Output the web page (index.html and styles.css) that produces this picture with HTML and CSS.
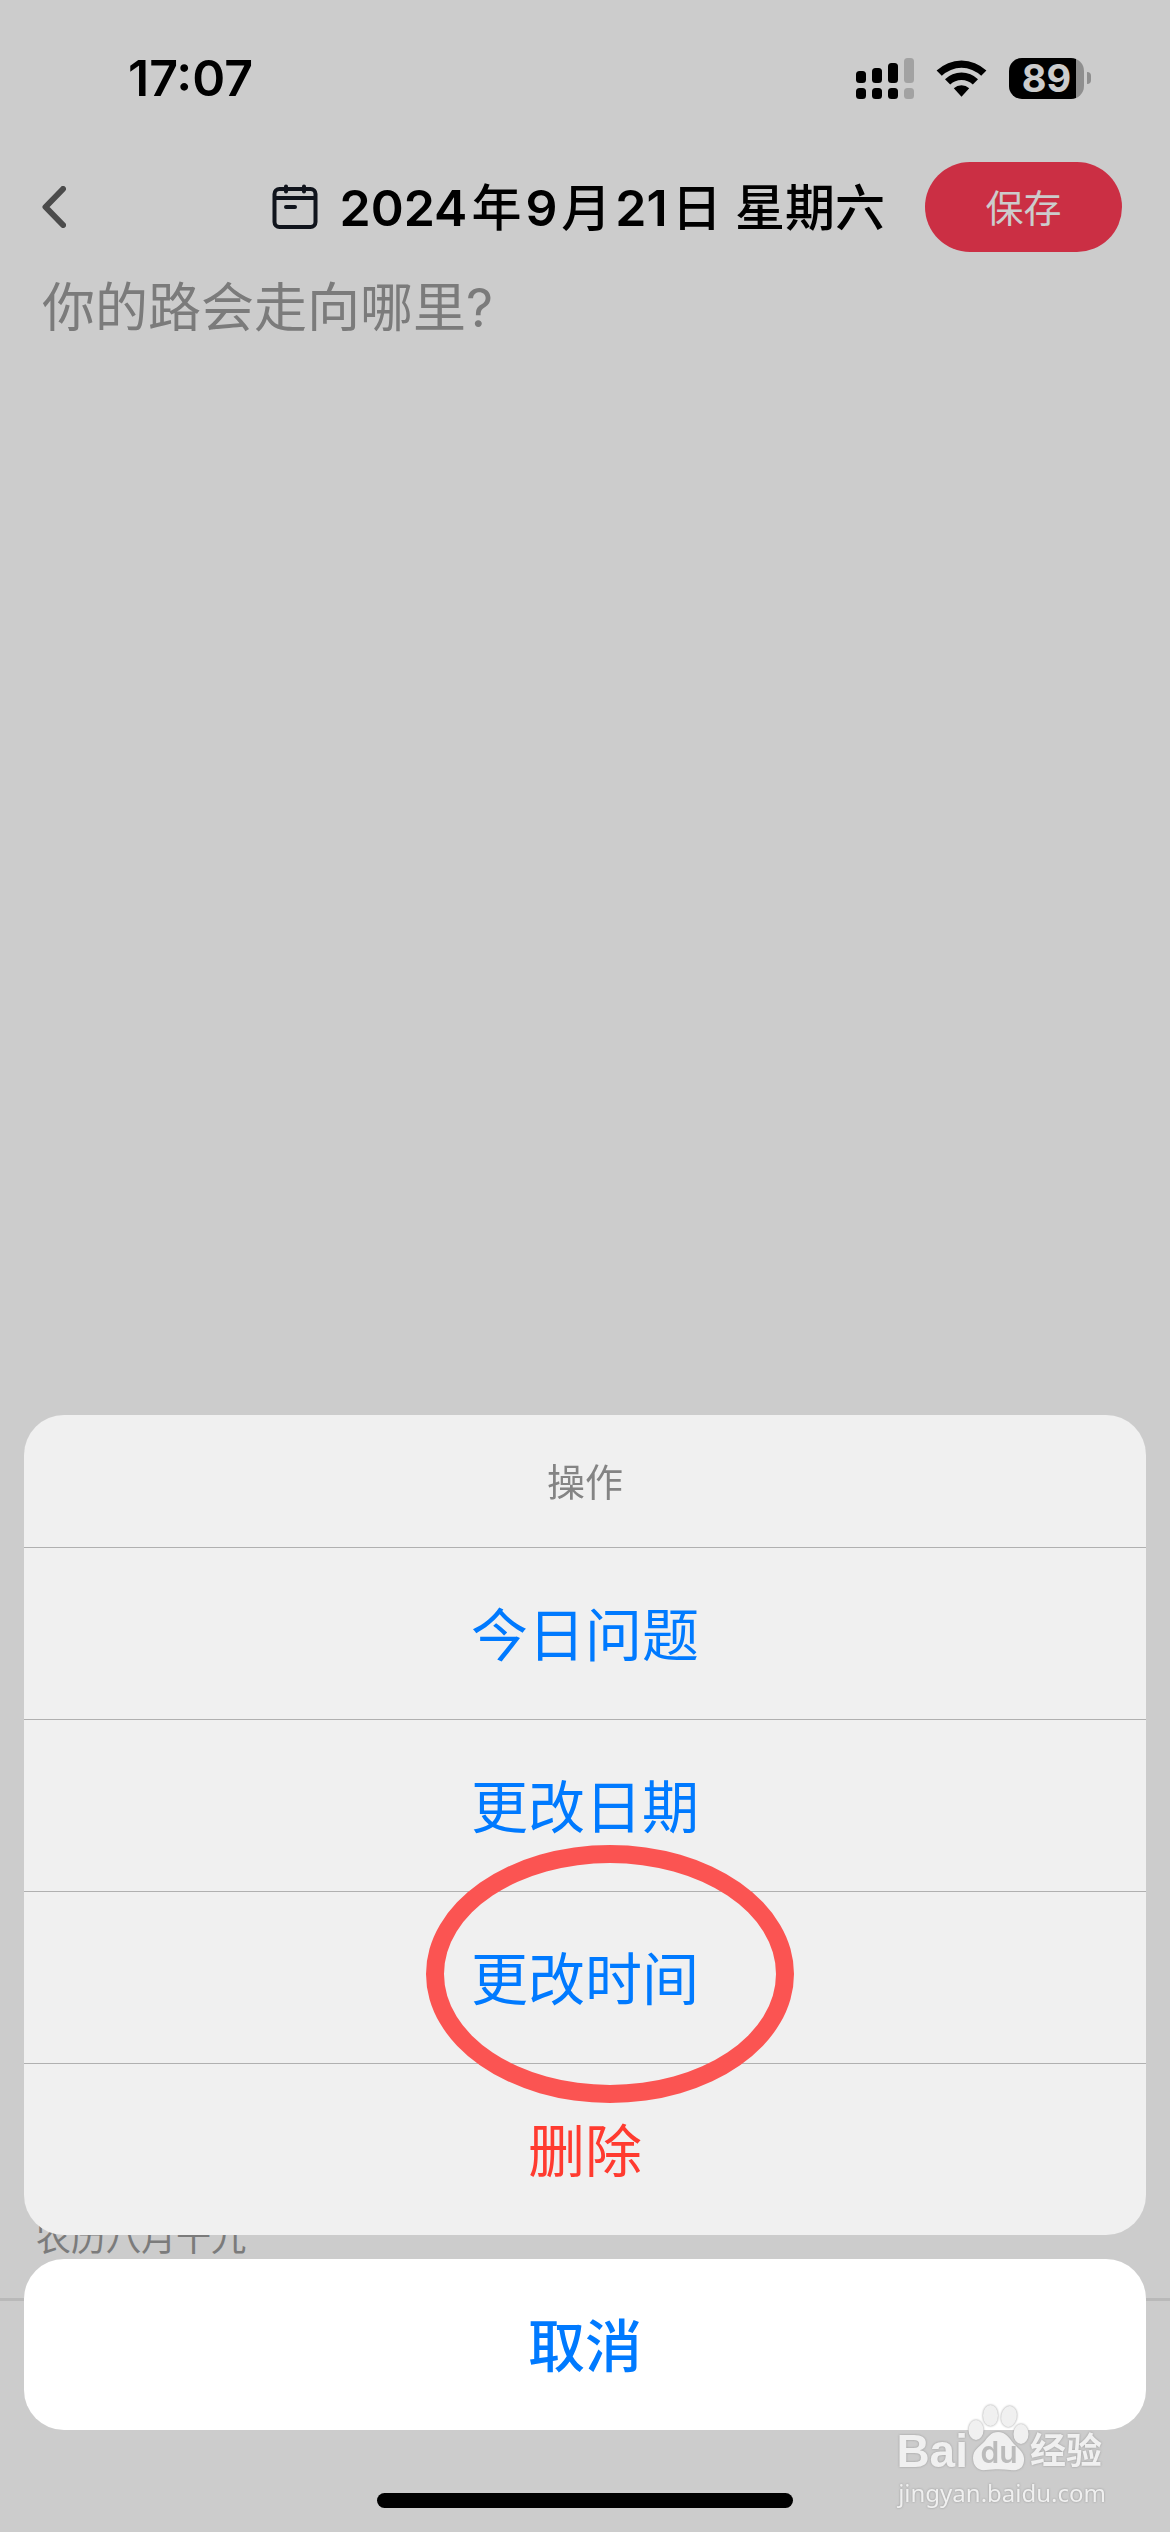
FILE: index.html
```
<!DOCTYPE html>
<html lang="zh-CN">
    <head>
        <title>日记</title>
        <meta charset="utf-8">
        <meta name="viewport" content="width=device-width">
        <link rel="stylesheet" href="styles.css">
    </head>
    <body>
        <div id="page">
            <div class="status-bar">
                <div class="time">17:07</div>
                <div class="status-icons">
                    <svg width="58" height="41" viewBox="0 0 58 41">
                        <g>
                            <rect x="0" y="13" width="10" height="12" rx="3.5"/>
                            <rect x="16" y="10" width="10" height="15" rx="3.5"/>
                            <rect x="32" y="5" width="10" height="20" rx="3.5"/>
                            <rect x="0" y="30" width="10" height="11" rx="3.5"/>
                            <rect x="16" y="30" width="10" height="11" rx="3.5"/>
                            <rect x="32" y="30" width="10" height="11" rx="3.5"/>
                        </g>
                        <g opacity=".2">
                            <rect x="48" y="0" width="10" height="25" rx="3.5"/>
                            <rect x="48" y="30" width="10" height="11" rx="3.5"/>
                        </g>
                    </svg>
                    <svg width="51" height="37" viewBox="0 0 51 37">
                        <path d="M0.6 10.6 A36 36 0 0 1 50.4 10.6 L45.2 15.8 A28.4 28.4 0 0 0 5.8 15.8 Z"/>
                        <path d="M9 19.3 A23.6 23.6 0 0 1 42 19.3 L36.8 24.6 A16.2 16.2 0 0 0 14.2 24.6 Z"/>
                        <path d="M17.8 28.2 A11.4 11.4 0 0 1 33.2 28.2 L25.5 36.8 Z"/>
                    </svg>
                    <div class="battery"><span>89</span></div>
                </div>
            </div>
            <div class="header">
                <button class="back" aria-label="返回">
                    <svg width="24" height="42" viewBox="0 0 24 42">
                        <path d="M21 3 L3.500 21 L21 39"/>
                    </svg>
                </button>
                <div class="date">
                    <svg width="46" height="46" viewBox="0 0 46 46">
                        <rect x="2.500" y="5" width="41" height="38" rx="5"/>
                        <path d="M3 14 H43 M14 2.500 V7.500 M32 2.500 V7.500 M14 23 H23"/>
                    </svg>
                    <div class="date-text"><b>2024</b>年<b>9</b>月<b>21</b>日 星期六</div>
                </div>
                <button class="save">保存</button>
            </div>
            <textarea aria-label="日记" placeholder="你的路会走向哪里?"></textarea>
            <div class="lunar">农历八月十九</div>
            <div class="toolbar"></div>
        </div>

        <div id="overlay">
            <div class="sheet">
                <div class="sheet-title">操作</div>
                <button>今日问题</button>
                <button>更改日期</button>
                <button class="marked">更改时间</button>
                <button class="danger">删除</button>
            </div>
            <button class="cancel">取消</button>
            <div class="home-indicator"></div>
        </div>

        <div class="watermark">
            <div class="brand">
                <span class="bai">Bai</span>
                <div class="paw">
                    <svg width="62" height="68" viewBox="0 0 62 68">
                        <ellipse cx="8" cy="26" rx="7.500" ry="10"/>
                        <ellipse cx="22.500" cy="11.500" rx="7.500" ry="10.500"/>
                        <ellipse cx="41" cy="12.500" rx="7.800" ry="10.500" transform="rotate(12 41 12.500)"/>
                        <ellipse cx="53" cy="30" rx="7.500" ry="10"/>
                        <path d="M30 28 C38 28 41 34 46 40 C51 45 57 49 56 57 C55 66 48 67 42 66 C34 65 27 65 18 66 C10 67 5 62 5 54 C5 46 11 43 16 38 C20 33 23 28 30 28 Z"/>
                    </svg>
                    <span>du</span>
                </div>
                <span class="jingyan">经验</span>
            </div>
            <div class="url">jingyan.baidu.com</div>
        </div>
    </body>
</html>
```
FILE: styles.css
```
*, *::after {
    box-sizing: border-box;
}
body {
    margin: 0;
    background: white;
    font-family: Inter, "Noto Sans CJK SC", sans-serif;
}
button {
    margin: 0;
    padding: 0;
    border: 0;
    background: none;
    font-family: inherit;
}
svg {
    display: block;
}
#page {
    display: flex;
    flex-direction: column;
    min-height: 100vh;
}

/* status bar */
.status-bar {
    display: flex;
    align-items: center;
    justify-content: space-between;
    height: 156px;
    padding: 0 78px 0 128px;
}
.time {
    font-size: 50px;
    font-weight: 600;
}
.status-icons {
    display: flex;
    align-items: center;
    gap: 22px;
}
.battery {
    position: relative;
    width: 75px;
    height: 41px;
    margin-right: 8px;
    border-radius: 13px;
    background: linear-gradient(to right, black 67px, #b3b3b3 67px);
    color: white;
    font-size: 38px;
    font-weight: 700;
    line-height: 41px;
    text-align: center;
}
.battery::after {
    content: "";
    position: absolute;
    top: 14px;
    right: -7px;
    width: 4px;
    height: 12px;
    border-radius: 0 4px 4px 0;
    background: #b3b3b3;
}

/* header */
.header {
    display: flex;
    align-items: center;
    justify-content: space-between;
    height: 102px;
    padding: 0 48px 0 42px;
}
.back svg {
    fill: none;
    stroke: #5e5e5e;
    stroke-width: 6;
    stroke-linecap: round;
    stroke-linejoin: round;
}
.date {
    display: flex;
    align-items: center;
    gap: 22px;
    margin-left: auto;
    margin-right: 40px;
    font-size: 50px;
    font-weight: 500;
    white-space: nowrap;
}
.date-text {
    padding-bottom: 6px;
}
.date b {
    margin: 0 4px;
    font-weight: 600;
}
.date b:first-child {
    margin-left: 0;
}
.date svg {
    fill: none;
    stroke: #141923;
    stroke-width: 4;
    stroke-linecap: round;
}
.save {
    width: 197px;
    height: 90px;
    padding-bottom: 4px;
    border-radius: 45px;
    background: #fe3b56;
    color: white;
    font-size: 38px;
}
textarea {
    flex: 1;
    width: 100%;
    padding: 10px 42px;
    border: 0;
    outline: 0;
    resize: none;
    background: none;
    font-family: inherit;
    font-size: 53px;
    line-height: 80px;
}
textarea::placeholder {
    color: #9a9a9a;
}
.lunar {
    padding: 0 36px;
    color: #9a9a9a;
    font-size: 35px;
    line-height: 52px;
}
.toolbar {
    height: 234px;
    margin-top: 34px;
    border-top: 3px solid #e8e8e8;
}

/* action sheet */
#overlay {
    position: fixed;
    top: 0;
    left: 0;
    right: 0;
    bottom: 0;
    display: flex;
    flex-direction: column;
    justify-content: flex-end;
    gap: 24px;
    padding: 24px;
    background: rgba(0, 0, 0, 0.2);
}
.sheet {
    display: flex;
    flex-direction: column;
    border-radius: 40px;
    background: #f0f0f0;
}
.sheet-title {
    padding-top: 2px;
    color: #848484;
    font-size: 38px;
    line-height: 130px;
    text-align: center;
}
.sheet button {
    height: 172px;
    padding-bottom: 6px;
    border-top: 1px solid #b0b0b0;
    color: #007aff;
    font-size: 57px;
}
.sheet .danger {
    color: #ff3b30;
}
.marked {
    position: relative;
}
.marked::after {
    content: "";
    position: absolute;
    top: -47px;
    left: calc(50% - 159px);
    width: 368px;
    height: 258px;
    border: 18px solid #fb5452;
    border-radius: 50%;
}
.cancel {
    height: 171px;
    padding-bottom: 6px;
    border-radius: 40px;
    background: white;
    color: #007aff;
    font-size: 57px;
    font-weight: 500;
}
.home-indicator {
    align-self: center;
    width: 416px;
    height: 15px;
    margin-top: 39px;
    border-radius: 8px;
    background: black;
}

/* watermark */
.watermark {
    position: fixed;
    right: 64px;
    bottom: 22px;
    color: #f0f0f0;
    text-align: right;
    filter: drop-shadow(0 0 1px #999);
}
.brand {
    display: flex;
    align-items: flex-end;
    justify-content: flex-end;
    margin-right: 4px;
}
.bai {
    font-family: "Liberation Sans", sans-serif;
    font-size: 46px;
    font-weight: 700;
    line-height: 50px;
}
.paw {
    position: relative;
    padding-bottom: 4px;
}
.paw svg {
    fill: #f0f0f0;
}
.paw span {
    position: absolute;
    bottom: 8px;
    left: 0;
    width: 62px;
    color: #bbb;
    font-size: 30px;
    font-weight: 600;
    line-height: 32px;
    text-align: center;
}
.jingyan {
    font-size: 36px;
    font-weight: 700;
    line-height: 50px;
}
.url {
    font-family: "Noto Sans", sans-serif;
    font-size: 24px;
    line-height: 34px;
}
```
